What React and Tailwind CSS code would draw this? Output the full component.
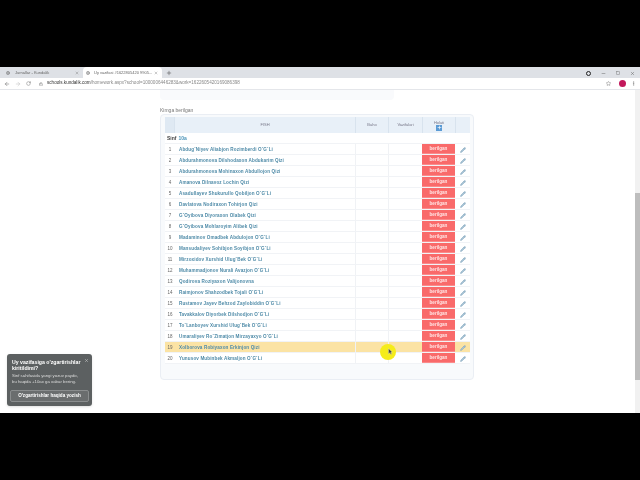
import { Plus, X, Minus, Square, ArrowLeft, ArrowRight, RotateCw, Lock, Star, MoreVertical, Pencil, Globe } from "lucide-react"

const students = [
  "Abdug`Niyev Aliabjon Rozimberdi O`G`Li",
  "Abdurahmonova Dilshodaxon Abdukarim Qizi",
  "Abdurahmonova Mohinaxon Abdullojon Qizi",
  "Amanova Dilnavoz Lochin Qizi",
  "Asadullayev Shukurullo Qobiljon O`G`Li",
  "Davlatova Nodiraxon Tohirjon Qizi",
  "G`Oyibova Diyoraxon Olabek Qizi",
  "G`Oyibova Mohlaroyim Alibek Qizi",
  "Madaminov Omadbek Abdulojon O`G`Li",
  "Mansudaliyev Sohibjon Soyibjon O`G`Li",
  "Mirzoxidov Xurshid Ulug`Bek O`G`Li",
  "Muhammadjonov Nurali Avazjon O`G`Li",
  "Qodirova Roziyaxon Valijonovna",
  "Raimjonov Shahzodbek Tojali O`G`Li",
  "Rustamov Jayev Behzod Zaylobiddin O`G`Li",
  "Tavakkalov Diyorbek Dilshodjon O`G`Li",
  "To`Lanboyev Xurshid Ulug`Bek O`G`Li",
  "Umaraliyev Ro`Zimatjon Mirzayaxyo O`G`Li",
  "Xolborova Robiyaxon Erkinjon Qizi",
  "Yunusov Mubinbek Akmaljon O`G`Li",
]

function Row({ n, name }) {
  const hl = n === 19
  return (
    <div className={`flex h-[11px] items-center border-b border-[#f1f3f6] ${hl ? "bg-[#fbe3a4]" : ""}`}>
      <div className="w-[10px] pt-[2px] text-center text-[4.5px] text-[#666]">{n}</div>
      <div className="w-[180px] pt-[2px] pl-1 text-[4.6px] font-bold tracking-[0.12px] whitespace-nowrap text-[#4f8ba8]">{name}</div>
      <div className="h-full w-[33px] border-l border-[#f0f2f5]" />
      <div className="h-full w-[34px] border-l border-[#f0f2f5]" />
      <div className="flex h-full w-[33px] items-center justify-center border-b border-[#fb8a8a] bg-[#f96a6a] pt-[2px] text-[4.6px] font-bold text-[#ffe5e5]">
        berilgan
      </div>
      <div className="flex w-[15px] justify-center pt-[1px]">
        <Pencil size={6} strokeWidth={2} className="fill-[#a9c4d6] text-[#7fa3ba]" />
      </div>
    </div>
  )
}

export default function App() {
  return (
    <div className="relative flex h-[480px] w-[640px] flex-col overflow-hidden bg-black font-['Liberation_Sans',sans-serif] blur-[0.4px]">
      <div className="h-[67px]" />

      {/* tabs */}
      <div className="flex h-[11px] items-end bg-[#dee1e6]">
        <div className="flex h-[11px] w-[80px] items-center pl-[6px] text-[4px] text-[#666]">
          <Globe size={4} />
          <span className="ml-[5px] flex-1 whitespace-nowrap">Jurnallar - Kundalik</span>
          <X size={4} className="mr-[1px]" />
        </div>
        <div className="ml-[3px] flex h-[11px] w-[79px] items-center rounded-t-sm bg-white pl-[3px] text-[4px] text-[#666]">
          <Globe size={4} />
          <span className="ml-[4px] flex-1 whitespace-nowrap">Uy vazifasi #1622805420 9905...</span>
          <X size={4} className="mr-[4px]" />
        </div>
        <Plus size={6} className="mb-[2.5px] ml-[4px] text-[#444]" />
        <div className="mb-[2.5px] ml-auto flex items-center gap-[10px] pr-[5.5px] text-[#555]">
          <div className="size-[5px] rounded-full border-[1.5px] border-[#222]" />
          <Minus size={5} />
          <Square size={4} />
          <X size={5} />
        </div>
      </div>

      {/* address bar */}
      <div className="flex h-[12px] items-center border-b border-[#e4e6ea] bg-white pl-[4px] text-[#666]">
        <ArrowLeft size={6} />
        <ArrowRight size={6} className="ml-[5px] text-[#bbb]" />
        <RotateCw size={5} className="ml-[4.5px]" />
        <Lock size={4} className="ml-[8.5px]" />
        <div className="ml-[4px] whitespace-nowrap text-[4.6px] text-[#888]">
          <span className="text-[#333]">schools.kundalik.com</span>/homework.aspx?school=1000006446283&amp;work=1622605420169086398
        </div>
        <div className="ml-auto flex items-center pr-[4.5px]">
          <Star size={5} />
          <div className="ml-[8px] size-[7px] rounded-full bg-[#c2185b]" />
          <MoreVertical size={5} className="ml-[5px]" />
        </div>
      </div>

      {/* page */}
      <div className="relative flex h-[323px] bg-white">
        <div className="flex-1 pl-[160px]">
          <div className="h-[10px] w-[234px] rounded-b bg-[#f9fafc]" />
          <div className="mt-[7px] text-[5px] leading-[6px] text-[#777]">Kimga berilgan</div>
          <div className="mt-[1px] h-[266px] w-[314px] rounded-sm border border-[#eaeef4] bg-[#f8fafc] px-[4px] pt-[2px]">
            <div className="w-[305px] bg-white">
              <div className="flex h-[16px] items-center bg-[#e8f0f8] text-[4px] text-[#778]">
                <div className="h-full w-[10px] border-r border-[#d8e3ee] bg-[#dfe9f3]" />
                <div className="w-[180px] text-center">FISH</div>
                <div className="flex h-full w-[33px] items-center justify-center border-l border-[#d8e3ee]">Baho</div>
                <div className="flex h-full w-[34px] items-center justify-center border-l border-[#d8e3ee]">Vazifalari</div>
                <div className="flex h-full w-[33px] flex-col items-center justify-center border-l border-[#d8e3ee]">
                  <span className="leading-[5px]">Holati</span>
                  <div className="flex size-[6px] items-center justify-center bg-[#5b9bd5]">
                    <Plus size={5} strokeWidth={3} className="text-white" />
                  </div>
                </div>
                <div className="h-full w-[15px] border-l border-[#d8e3ee]" />
              </div>
              <div className="flex h-[11px] items-center border-b border-[#f1f3f6] pt-[2px] pl-[2px] text-[5px]">
                <b className="text-[#444]">Sinf</b>
                <span className="ml-[2px] font-bold text-[#4a93b8]">10a</span>
              </div>
              {students.map((name, i) => (
                <Row key={name} n={i + 1} name={name} />
              ))}
            </div>
          </div>
        </div>

        {/* scrollbar */}
        <div className="flex w-[5px] flex-col bg-[#f1f1f1]">
          <div className="h-[103px] shrink-0" />
          <div className="h-[187px] shrink-0 bg-[#bdbdbd]" />
        </div>

        {/* recording cursor highlight */}
        <div className="absolute top-[254px] left-[380px] size-[16px] rounded-full bg-[#f5ec1a]" />
        <svg className="absolute top-[258px] left-[388px]" width="5" height="7" viewBox="0 0 5 7">
          <path d="M0.5 0.5 L0.5 6 L1.8 4.8 L3 6.5 L3.8 6 L2.7 4.3 L4.4 4.2 Z" fill="#444" stroke="#fff" strokeWidth="0.3" />
        </svg>

        {/* popup */}
        <div className="absolute top-[264px] left-[7px] w-[85px] rounded-[3px] bg-[#5c6061] px-[3px] pt-[5px] pb-[4px] text-white shadow-sm">
          <X size={5} className="absolute top-[4px] right-[3px] text-[#ddd]" />
          <div className="pl-[2px] text-[5.2px] leading-[6px] font-bold whitespace-nowrap">Uy vazifasiga o'zgartirishlar<br />kiritildimi?</div>
          <div className="mt-[2px] pl-[2px] text-[4.3px] leading-[6px] text-[#dcdcdc]">
            Sinf sahifasida yangi yozuv paydo,<br />bu haqida +10ax ga xabar bering.
          </div>
          <div className="mt-[5px] flex h-[12px] items-center justify-center rounded-[2px] border border-[#8a8d8e] bg-[#6a6d6e] text-[4.6px] font-bold">
            O'zgartirishlar haqida yozish
          </div>
        </div>
      </div>
    </div>
  )
}
